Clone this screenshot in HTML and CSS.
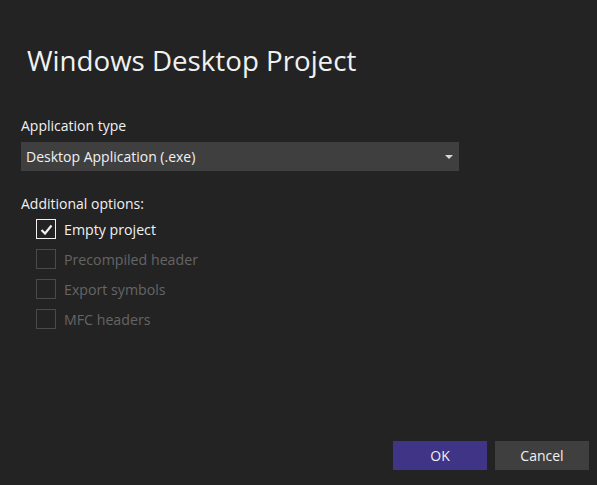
FILE: index.html
```html
<!DOCTYPE html>
<html lang="en">
<head>
<meta charset="utf-8">
<title>Windows Desktop Project</title>
<link rel="stylesheet" href="styles.css">
</head>
<body>
<div class="dialog">
  <h1 class="title">Windows Desktop Project</h1>
  <div class="field">
    <div class="label">Application type</div>
    <div class="select">
      <span class="select-text">Desktop Application (.exe)</span>
      <svg class="caret" width="8" height="4" viewBox="0 0 8 4"><path d="M0 0 H8 L4 4 Z" fill="#d8d8d8"/></svg>
    </div>
  </div>
  <div class="options">
    <div class="label">Additional options:</div>
    <ul class="checks">
      <li class="check">
        <span class="box box-on">
          <svg width="13" height="11" viewBox="0 0 13 11"><path d="M1.5 6 L5 9.5 L11.5 1.5" fill="none" stroke="#f1f1f1" stroke-width="2.2"/></svg>
        </span>
        <span class="check-text">Empty project</span>
      </li>
      <li class="check disabled"><span class="box"></span><span class="check-text">Precompiled header</span></li>
      <li class="check disabled"><span class="box"></span><span class="check-text">Export symbols</span></li>
      <li class="check disabled"><span class="box"></span><span class="check-text">MFC headers</span></li>
    </ul>
  </div>
  <div class="spacer"></div>
  <div class="buttons">
    <button class="btn btn-primary">OK</button>
    <button class="btn">Cancel</button>
  </div>
</div>
</body>
</html>
```
FILE: styles.css
```css
html, body {
  margin: 0;
  padding: 0;
  background: #232323;
  height: 100%;
}
body {
  font-family: "Open Sans", "Noto Sans", sans-serif;
  color: #f1f1f1;
}
.dialog {
  box-sizing: border-box;
  height: 485px;
  display: flex;
  flex-direction: column;
  padding: 0 8px 15px 21px;
}
.title {
  margin: 40px 0 0 6px;
  font-size: 27.7px;
  font-weight: 400;
  line-height: 40px;
  color: #f1f1f1;
}
.field {
  margin-top: 36px;
  display: flex;
  flex-direction: column;
}
.label {
  font-size: 14px;
  line-height: 20px;
  color: #f1f1f1;
}
.select {
  margin-top: 6px;
  width: 438px;
  height: 29px;
  background: #3f3f3f;
  display: flex;
  align-items: center;
  justify-content: space-between;
  padding: 0 6px 0 5px;
  box-sizing: border-box;
}
.select-text {
  font-size: 14px;
  color: #f1f1f1;
}
.caret {
  display: block;
}
.options {
  margin-top: 23px;
}
.checks {
  list-style: none;
  margin: 5px 0 0 15px;
  padding: 0;
  display: flex;
  flex-direction: column;
  gap: 10px;
}
.check {
  display: flex;
  align-items: center;
  gap: 8px;
  height: 20px;
}
.box {
  box-sizing: border-box;
  width: 20px;
  height: 20px;
  border: 1px solid #4a4a4a;
  display: flex;
  align-items: center;
  justify-content: center;
}
.box-on {
  border-color: #f1f1f1;
}
.check-text {
  font-size: 14.2px;
}
.disabled .check-text {
  color: #656565;
}
.spacer {
  flex: 1;
}
.buttons {
  display: flex;
  justify-content: flex-end;
  gap: 8px;
}
.btn {
  width: 94px;
  height: 29px;
  border: none;
  background: #3f3f3f;
  color: #f1f1f1;
  font-family: "Open Sans", "Noto Sans", sans-serif;
  font-size: 14px;
  padding: 0;
}
.btn-primary {
  background: #3f3485;
}
```
